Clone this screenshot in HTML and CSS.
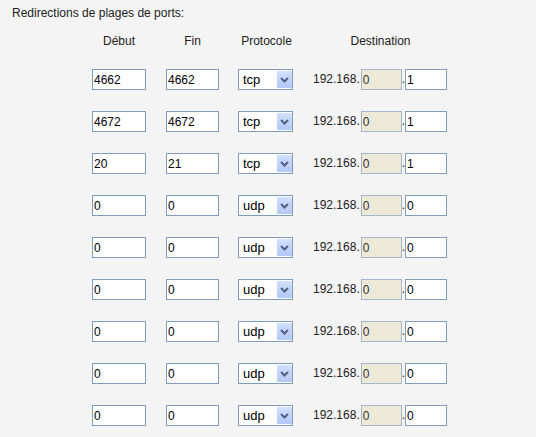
FILE: index.html
```html
<!DOCTYPE html>
<html lang="fr">
<head>
    <meta charset="UTF-8">
    <title>Redirections de plages de ports</title>
    <link rel="stylesheet" href="styles.css">
</head>
<body>

    <div class="title">Redirections de plages de ports:</div>

    <form class="ports">
        <!-- En-têtes -->
        <div class="head">Début</div>
        <div class="head">Fin</div>
        <div class="head">Protocole</div>
        <div class="head">Destination</div>

        <!-- Ligne 1 -->
        <input class="port" type="text" value="4662">
        <input class="port" type="text" value="4662">
        <div class="proto">
            <select><option selected>tcp</option><option>udp</option></select>
            <span class="arrow"><svg width="9" height="6" viewBox="0 0 9 6"><path d="M1 1 L4.5 4.5 L8 1" fill="none" stroke="#4d6185" stroke-width="2"/></svg></span>
        </div>
        <div class="dest">192.168.<input class="net" type="text" value="0" readonly>.<input class="host" type="text" value="1"></div>

        <!-- Ligne 2 -->
        <input class="port" type="text" value="4672">
        <input class="port" type="text" value="4672">
        <div class="proto">
            <select><option selected>tcp</option><option>udp</option></select>
            <span class="arrow"><svg width="9" height="6" viewBox="0 0 9 6"><path d="M1 1 L4.5 4.5 L8 1" fill="none" stroke="#4d6185" stroke-width="2"/></svg></span>
        </div>
        <div class="dest">192.168.<input class="net" type="text" value="0" readonly>.<input class="host" type="text" value="1"></div>

        <!-- Ligne 3 -->
        <input class="port" type="text" value="20">
        <input class="port" type="text" value="21">
        <div class="proto">
            <select><option selected>tcp</option><option>udp</option></select>
            <span class="arrow"><svg width="9" height="6" viewBox="0 0 9 6"><path d="M1 1 L4.5 4.5 L8 1" fill="none" stroke="#4d6185" stroke-width="2"/></svg></span>
        </div>
        <div class="dest">192.168.<input class="net" type="text" value="0" readonly>.<input class="host" type="text" value="1"></div>

        <!-- Lignes 4 à 9 -->
        <input class="port" type="text" value="0">
        <input class="port" type="text" value="0">
        <div class="proto">
            <select><option>tcp</option><option selected>udp</option></select>
            <span class="arrow"><svg width="9" height="6" viewBox="0 0 9 6"><path d="M1 1 L4.5 4.5 L8 1" fill="none" stroke="#4d6185" stroke-width="2"/></svg></span>
        </div>
        <div class="dest">192.168.<input class="net" type="text" value="0" readonly>.<input class="host" type="text" value="0"></div>

        <input class="port" type="text" value="0">
        <input class="port" type="text" value="0">
        <div class="proto">
            <select><option>tcp</option><option selected>udp</option></select>
            <span class="arrow"><svg width="9" height="6" viewBox="0 0 9 6"><path d="M1 1 L4.5 4.5 L8 1" fill="none" stroke="#4d6185" stroke-width="2"/></svg></span>
        </div>
        <div class="dest">192.168.<input class="net" type="text" value="0" readonly>.<input class="host" type="text" value="0"></div>

        <input class="port" type="text" value="0">
        <input class="port" type="text" value="0">
        <div class="proto">
            <select><option>tcp</option><option selected>udp</option></select>
            <span class="arrow"><svg width="9" height="6" viewBox="0 0 9 6"><path d="M1 1 L4.5 4.5 L8 1" fill="none" stroke="#4d6185" stroke-width="2"/></svg></span>
        </div>
        <div class="dest">192.168.<input class="net" type="text" value="0" readonly>.<input class="host" type="text" value="0"></div>

        <input class="port" type="text" value="0">
        <input class="port" type="text" value="0">
        <div class="proto">
            <select><option>tcp</option><option selected>udp</option></select>
            <span class="arrow"><svg width="9" height="6" viewBox="0 0 9 6"><path d="M1 1 L4.5 4.5 L8 1" fill="none" stroke="#4d6185" stroke-width="2"/></svg></span>
        </div>
        <div class="dest">192.168.<input class="net" type="text" value="0" readonly>.<input class="host" type="text" value="0"></div>

        <input class="port" type="text" value="0">
        <input class="port" type="text" value="0">
        <div class="proto">
            <select><option>tcp</option><option selected>udp</option></select>
            <span class="arrow"><svg width="9" height="6" viewBox="0 0 9 6"><path d="M1 1 L4.5 4.5 L8 1" fill="none" stroke="#4d6185" stroke-width="2"/></svg></span>
        </div>
        <div class="dest">192.168.<input class="net" type="text" value="0" readonly>.<input class="host" type="text" value="0"></div>

        <input class="port" type="text" value="0">
        <input class="port" type="text" value="0">
        <div class="proto">
            <select><option>tcp</option><option selected>udp</option></select>
            <span class="arrow"><svg width="9" height="6" viewBox="0 0 9 6"><path d="M1 1 L4.5 4.5 L8 1" fill="none" stroke="#4d6185" stroke-width="2"/></svg></span>
        </div>
        <div class="dest">192.168.<input class="net" type="text" value="0" readonly>.<input class="host" type="text" value="0"></div>
    </form>

</body>
</html>
```

FILE: styles.css
```css
/* Page */
body {
    margin: 0;
    background-color: #f4f4f4;
    font-family: "Liberation Sans", Arial, sans-serif;
    font-size: 12px;
    color: #222;
}
.title {
    padding: 6px 0 0 12px;
    line-height: 14px;
}

/* Tableau des redirections */
.ports {
    display: grid;
    grid-template-columns: 54px 53px 55px 133px;
    column-gap: 20px;
    row-gap: 21px;
    margin: 15px 0 0 92px;
    align-items: center;
}
.head {
    text-align: center;
    line-height: 13px;
}
input {
    box-sizing: border-box;
    height: 21px;
    margin: 0;
    padding: 0 1px;
    border: 1px solid #7f9db9;
    background-color: #fff;
    font-family: "Liberation Sans", Arial, sans-serif;
    font-size: 12px;
    color: #000;
    outline: none;
}
.port {
    width: 100%;
}

/* Liste déroulante */
.proto {
    position: relative;
    height: 21px;
    margin-left: -1px;
}
.proto select {
    appearance: none;
    -webkit-appearance: none;
    box-sizing: border-box;
    width: 55px;
    height: 21px;
    margin: 0;
    padding: 0 0 0 4px;
    border: 1px solid #7f9db9;
    border-radius: 0;
    background-color: #fff;
    font-family: "Liberation Sans", Arial, sans-serif;
    font-size: 13px;
    color: #000;
    outline: none;
}
.arrow {
    position: absolute;
    top: 2px;
    right: 2px;
    width: 15px;
    height: 17px;
    display: flex;
    align-items: center;
    justify-content: center;
    background: linear-gradient(#d2dffd, #b3c8f5);
    border-radius: 1px;
    pointer-events: none;
}

/* Adresse de destination */
.dest {
    display: flex;
    align-items: center;
    white-space: nowrap;
    line-height: 21px;
    margin-left: -1px;
}
.dest .net {
    width: 41px;
    margin-left: 1px;
    border-color: #a7b5c9;
    background-color: #ece9d8;
    color: #333;
}
.dest .host {
    width: 42px;
}
```
